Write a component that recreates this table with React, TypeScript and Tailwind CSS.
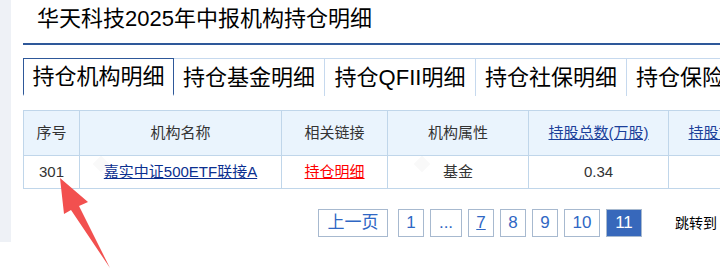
import React from "react"

const FONT = { fontFamily: '"Liberation Sans", "Noto Sans CJK SC", sans-serif' }

const TABS = ["持仓机构明细", "持仓基金明细", "持仓QFII明细", "持仓社保明细", "持仓保险明细"]

type Column = { label: string; width: string; link?: boolean }

const COLUMNS: Column[] = [
  { label: "序号", width: "w-[56px]" },
  { label: "机构名称", width: "w-[202px]" },
  { label: "相关链接", width: "w-[106px]" },
  { label: "机构属性", width: "w-[141px]" },
  { label: "持股总数(万股)", width: "w-[140px]", link: true },
  { label: "持股市值(亿元)", width: "w-[140px]", link: true },
]

const PAGES = ["1", "...", "7", "8", "9", "10", "11"]

function Watermark({ className }: { className: string }) {
  return (
    <div
      aria-hidden
      className={`pointer-events-none absolute flex items-center gap-2 text-[22px] font-bold text-black/[0.025] ${className}`}
    >
      <span className="inline-block h-3 w-3 rotate-45 bg-black/[0.025]" />
      eastmoney.com
    </div>
  )
}

function Arrow() {
  return (
    <svg className="pointer-events-none absolute left-0 top-0" width="720" height="279" viewBox="0 0 720 279">
      <polygon points="60,178 88,202 79,206 110,268 71,210 64,214" fill="#f2504f" />
    </svg>
  )
}

export default function App() {
  return (
    <div className="relative flex h-[279px] w-[720px] overflow-hidden bg-white" style={FONT}>
      <div className="h-[242px] w-[11px] shrink-0 bg-[#eef1f6]" />

      <div className="ml-[12px] flex min-w-0 flex-1 flex-col">
        {/* title */}
        <div className="h-[45px] shrink-0 border-b-2 border-[#2e5899] pl-[14px]">
          <h1 className="pt-[5px] text-[22px] leading-[28px] text-black">华天科技2025年中报机构持仓明细</h1>
        </div>

        {/* tabs */}
        <div className="mt-[13px] flex h-[38px] shrink-0 border-b-2 border-[#2e5899]">
          {TABS.map((tab, i) => (
            <div
              key={tab}
              className={`-mb-[2px] flex w-[151px] shrink-0 items-center justify-center border-t border-r text-[22px] leading-none text-black ${
                i === 0
                  ? "border-l border-[#2e5899] border-b-2 border-b-white bg-white"
                  : "border-[#c6d9ee] bg-white"
              }`}
            >
              {tab}
            </div>
          ))}
        </div>

        {/* holdings table */}
        <div className="relative mt-[14px] shrink-0">
          <Watermark className="left-[72px] top-[37px]" />
          <Watermark className="left-[393px] top-[37px]" />
          <table className="relative w-[1000px] table-fixed border-collapse text-[15px] text-[#333]">
            <thead>
              <tr className="h-[45px] bg-[#eaf4fd]">
                {COLUMNS.map((col) => (
                  <th key={col.label} className={`${col.width} border border-[#c0d6ea] p-0 text-center font-normal`}>
                    {col.link ? <span className="text-[#1a3f9a] underline">{col.label}</span> : col.label}
                  </th>
                ))}
                <th className="border border-[#c0d6ea]" />
              </tr>
            </thead>
            <tbody>
              <tr className="h-[33px]">
                <td className="border border-[#c0d6ea] text-center">301</td>
                <td className="border border-[#c0d6ea] text-center">
                  <span className="text-[#0b2f8f] underline">嘉实中证500ETF联接A</span>
                </td>
                <td className="border border-[#c0d6ea] text-center">
                  <span className="text-[#ff0000] underline">持仓明细</span>
                </td>
                <td className="border border-[#c0d6ea] text-center">基金</td>
                <td className="border border-[#c0d6ea] text-center">0.34</td>
                <td className="border border-[#c0d6ea] text-center" />
                <td className="border border-[#c0d6ea]" />
              </tr>
            </tbody>
          </table>
        </div>

        {/* pager */}
        <div className="ml-[295px] mt-[20px] flex h-[28px] shrink-0 items-stretch text-[17px] text-[#2f67c4]">
          <span className="mr-[10px] flex w-[70px] items-center justify-center border border-[#a7b9cf]">上一页</span>
          <div className="flex gap-[6px]">
            {PAGES.map((p) =>
              p === "11" ? (
                <span key={p} className="flex w-[36px] items-center justify-center border border-[#a7b9cf] bg-[#3768bb] text-white">
                  {p}
                </span>
              ) : (
                <span
                  key={p}
                  className={`flex items-center justify-center border border-[#a7b9cf] ${
                    p === "10" ? "w-[36px]" : p === "..." ? "w-[32px]" : "w-[26px]"
                  } ${p === "7" ? "underline" : ""}`}
                >
                  {p}
                </span>
              )
            )}
          </div>
          <span className="ml-[33px] flex shrink-0 items-center whitespace-nowrap text-[14px] text-black">跳转到</span>
        </div>
      </div>

      <Arrow />
    </div>
  )
}
